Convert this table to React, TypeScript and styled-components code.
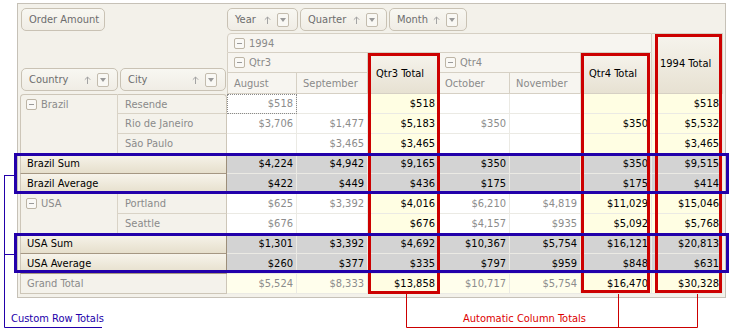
import { Fragment } from "react";
import styled, { createGlobalStyle, css } from "styled-components";

const GlobalStyle = createGlobalStyle`
  html, body {
    margin: 0;
    padding: 0;
    background: #ffffff;
  }
  body {
    font-family: "DejaVu Sans Condensed", "DejaVu Sans", sans-serif;
    font-size: 11px;
  }
`;

type CellKind = "plain" | "total" | "custom" | "grand" | "grandTotal";
type RowKind = "field" | "custom" | "grand";

interface PivotRow {
  kind: RowKind;
  country?: string;
  span?: number;
  city?: string;
  label?: string;
  values: string[];
}

// first data row sits on grid line 5 (filter row + three column header rows)
const FIRST_DATA_ROW = 5;
const TOTAL_COLUMNS = new Set([2, 5, 6]);

const rows: PivotRow[] = [
  { kind: "field", country: "Brazil", span: 3, city: "Resende", values: ["$518", "", "$518", "", "", "", "$518"] },
  { kind: "field", city: "Rio de Janeiro", values: ["$3,706", "$1,477", "$5,183", "$350", "", "$350", "$5,532"] },
  { kind: "field", city: "São Paulo", values: ["", "$3,465", "$3,465", "", "", "", "$3,465"] },
  { kind: "custom", label: "Brazil Sum", values: ["$4,224", "$4,942", "$9,165", "$350", "", "$350", "$9,515"] },
  { kind: "custom", label: "Brazil Average", values: ["$422", "$449", "$436", "$175", "", "$175", "$414"] },
  { kind: "field", country: "USA", span: 2, city: "Portland", values: ["$625", "$3,392", "$4,016", "$6,210", "$4,819", "$11,029", "$15,046"] },
  { kind: "field", city: "Seattle", values: ["$676", "", "$676", "$4,157", "$935", "$5,092", "$5,768"] },
  { kind: "custom", label: "USA Sum", values: ["$1,301", "$3,392", "$4,692", "$10,367", "$5,754", "$16,121", "$20,813"] },
  { kind: "custom", label: "USA Average", values: ["$260", "$377", "$335", "$797", "$959", "$848", "$631"] },
  { kind: "grand", label: "Grand Total", values: ["$5,524", "$8,333", "$13,858", "$10,717", "$5,754", "$16,470", "$30,328"] },
];

const cellKind = (row: RowKind, col: number): CellKind => {
  if (row === "custom") return "custom";
  const isTotal = TOTAL_COLUMNS.has(col);
  if (row === "grand") return isTotal ? "grandTotal" : "grand";
  return isTotal ? "total" : "plain";
};

const Page = styled.div`
  position: relative;
  width: 731px;
  height: 332px;
  overflow: hidden;
`;

const Pivot = styled.div`
  width: 709px;
  margin: 3px 0 0 17px;
  box-sizing: border-box;
  border: 1px solid #c6c1b7;
  background: #f3f1ea;
  padding: 0 2px 3px 2px;
`;

const Grid = styled.div`
  display: grid;
  grid-template-columns: 98px 109px 70px repeat(6, 71px);
  grid-template-rows: 29px 20px 20px 21px repeat(10, 20px);
`;

const FilterArea = styled.div`
  grid-column: 1 / 3;
  grid-row: 1;
  display: flex;
  align-items: flex-start;
  padding: 4px 0 0 1px;
`;

const ColumnFieldArea = styled.div`
  grid-column: 3 / 10;
  grid-row: 1;
  display: flex;
  align-items: flex-start;
  gap: 2px;
  padding-top: 4px;
`;

const RowFieldArea = styled.div`
  grid-column: 1 / 3;
  grid-row: 2 / 5;
  display: flex;
  align-items: flex-end;
  gap: 2px;
  padding: 0 0 3px 1px;
`;

const FieldButton = styled.div<{ $width: number }>`
  width: ${(p) => p.$width}px;
  height: 23px;
  box-sizing: border-box;
  display: flex;
  align-items: center;
  padding: 0 8px 0 7px;
  border: 1px solid #c9c2b4;
  border-radius: 5px;
  background: linear-gradient(#f8f7f2, #f0ede5);
  color: #6d6d6d;
  white-space: nowrap;
`;

const FieldCaption = styled.span`
  flex: 1;
`;

const SortIcon = styled.svg`
  width: 7px;
  height: 8px;
  margin-right: 6px;
  flex: none;
`;

const DropBox = styled.span`
  width: 12px;
  height: 14px;
  box-sizing: border-box;
  flex: none;
  display: flex;
  align-items: center;
  justify-content: center;
  border: 1px solid #c3bcae;
  border-radius: 2px;
  background: #f9f8f4;

  &::after {
    content: "";
    border-top: 4px solid #9a9a9a;
    border-left: 3.5px solid transparent;
    border-right: 3.5px solid transparent;
  }
`;

const MinusBox = styled.span`
  width: 11px;
  height: 11px;
  box-sizing: border-box;
  flex: none;
  display: flex;
  align-items: center;
  justify-content: center;
  border: 1px solid #bdb5a6;
  border-radius: 2px;
  background: #faf9f6;

  &::after {
    content: "";
    width: 5px;
    height: 1px;
    background: #9a9a9a;
  }
`;

interface Placed {
  $col: number;
  $row: number;
  $colSpan?: number;
  $rowSpan?: number;
}

const placed = css<Placed>`
  grid-column: ${(p) => p.$col} / span ${(p) => p.$colSpan ?? 1};
  grid-row: ${(p) => p.$row} / span ${(p) => p.$rowSpan ?? 1};
  box-sizing: border-box;
  min-width: 0;
`;

const HeaderCell = styled.div<Placed & { $total?: boolean; $top?: boolean; $left?: boolean }>`
  ${placed};
  display: flex;
  align-items: center;
  gap: 4px;
  padding-left: ${(p) => (p.$total ? 8 : 6)}px;
  border-right: 1px solid #d6d0c4;
  border-bottom: 1px solid #d6d0c4;
  background: #f7f5f0;
  color: #8a8a8a;
  white-space: nowrap;
  ${(p) =>
    p.$total &&
    css`
      background: linear-gradient(#f6f4ed, #e7e1d2);
      color: #000;
    `}
  ${(p) =>
    p.$top &&
    css`
      border-top: 1px solid #d6d0c4;
    `}
  ${(p) =>
    p.$left &&
    css`
      border-left: 1px solid #d6d0c4;
    `}
  ${(p) =>
    p.$top &&
    p.$left &&
    css`
      border-top-left-radius: 4px;
    `}
`;

const CountryCell = styled.div<Placed & { $first?: boolean }>`
  ${placed};
  display: flex;
  align-items: flex-start;
  padding-left: 5px;
  border-left: 1px solid #cdc6b8;
  border-right: 1px solid #d9d3c6;
  border-bottom: 1px solid #d9d3c6;
  background: #f4f2eb;
  color: #8a8a8a;
  ${(p) =>
    p.$first &&
    css`
      border-top: 1px solid #cdc6b8;
      border-top-left-radius: 4px;
    `}
`;

const CountryLine = styled.div`
  height: 19px;
  display: flex;
  align-items: center;
  gap: 4px;
`;

const CityCell = styled.div<Placed & { $first?: boolean }>`
  ${placed};
  display: flex;
  align-items: center;
  padding-left: 7px;
  border-right: 1px solid #cdc6b8;
  border-bottom: 1px solid #d9d3c6;
  background: #f4f2eb;
  color: #8a8a8a;
  white-space: nowrap;
  ${(p) =>
    p.$first &&
    css`
      border-top: 1px solid #cdc6b8;
      border-top-right-radius: 4px;
    `}
`;

const SummaryHead = styled.div<Placed & { $kind: RowKind }>`
  ${placed};
  display: flex;
  align-items: center;
  padding-left: 6px;
  border-left: 1px solid #cdc6b8;
  white-space: nowrap;
  ${(p) =>
    p.$kind === "custom"
      ? css`
          background: linear-gradient(#f7f4eb, #e6dfcc);
          border-right: 1px solid #9c8e7a;
          border-bottom: 1px solid #a59783;
          color: #000;
        `
      : css`
          background: #f4f2eb;
          border-right: 1px solid #cdc6b8;
          border-bottom: 1px solid #cdc6b8;
          color: #8a8a8a;
        `}
`;

const cellTheme: Record<CellKind, { bg: string; fg: string }> = {
  plain: { bg: "#ffffff", fg: "#8c8c8c" },
  total: { bg: "#fffee3", fg: "#000000" },
  custom: { bg: "#d3d3d3", fg: "#000000" },
  grand: { bg: "#fffeec", fg: "#8c8c8c" },
  grandTotal: { bg: "#fffde3", fg: "#000000" },
};

const ValueCell = styled.div<Placed & { $kind: CellKind; $focused?: boolean }>`
  ${placed};
  display: flex;
  align-items: center;
  justify-content: flex-end;
  padding-right: 3px;
  border-right: 1px solid #ebeae4;
  border-bottom: 1px solid #ebeae4;
  background: ${(p) => cellTheme[p.$kind].bg};
  color: ${(p) => cellTheme[p.$kind].fg};
  ${(p) =>
    p.$focused &&
    css`
      outline: 1px dotted #8a8a8a;
      outline-offset: -1px;
    `}
`;

// annotation frames laid over the grid cells
const Frame = styled.div<Placed & { $color: string; $inset: string }>`
  ${placed};
  margin: ${(p) => p.$inset};
  border: 3px solid ${(p) => p.$color};
  pointer-events: none;
  z-index: 2;
`;

const Callouts = styled.svg`
  position: absolute;
  left: 0;
  top: 0;
  width: 731px;
  height: 332px;
  pointer-events: none;
`;

const Footer = styled.div`
  display: grid;
  grid-template-columns: 452px auto;
  margin-top: 14px;
  padding-left: 11px;
  line-height: 13px;
`;

const Note = styled.span<{ $color: string }>`
  color: ${(p) => p.$color};
  white-space: nowrap;
`;

const SortArrow = () => (
  <SortIcon viewBox="0 0 7 8">
    <path d="M3.5 1 V8 M0.8 3.7 L3.5 1 L6.2 3.7" fill="none" stroke="#a3a3a3" strokeWidth="1" />
  </SortIcon>
);

const Field = ({ caption, width, sortable = true }: { caption: string; width: number; sortable?: boolean }) => (
  <FieldButton $width={width}>
    <FieldCaption>{caption}</FieldCaption>
    {sortable && (
      <>
        <SortArrow />
        <DropBox />
      </>
    )}
  </FieldButton>
);

const BLUE = "#2200aa";
const RED = "#cc0000";

export default function App() {
  return (
    <Page>
      <GlobalStyle />
      <Pivot>
        <Grid>
          <FilterArea>
            <Field caption="Order Amount" width={84} sortable={false} />
          </FilterArea>
          <ColumnFieldArea>
            <Field caption="Year" width={71} />
            <Field caption="Quarter" width={87} />
            <Field caption="Month" width={78} />
          </ColumnFieldArea>
          <RowFieldArea>
            <Field caption="Country" width={97} />
            <Field caption="City" width={106} />
          </RowFieldArea>

          <HeaderCell $col={3} $row={2} $colSpan={6} $top $left>
            <MinusBox />
            1994
          </HeaderCell>
          <HeaderCell $col={9} $row={2} $rowSpan={3} $total $top>
            1994 Total
          </HeaderCell>
          <HeaderCell $col={3} $row={3} $colSpan={2} $left>
            <MinusBox />
            Qtr3
          </HeaderCell>
          <HeaderCell $col={5} $row={3} $rowSpan={2} $total>
            Qtr3 Total
          </HeaderCell>
          <HeaderCell $col={6} $row={3} $colSpan={2}>
            <MinusBox />
            Qtr4
          </HeaderCell>
          <HeaderCell $col={8} $row={3} $rowSpan={2} $total>
            Qtr4 Total
          </HeaderCell>
          <HeaderCell $col={3} $row={4} $left>
            August
          </HeaderCell>
          <HeaderCell $col={4} $row={4}>
            September
          </HeaderCell>
          <HeaderCell $col={6} $row={4}>
            October
          </HeaderCell>
          <HeaderCell $col={7} $row={4}>
            November
          </HeaderCell>

          {rows.map((r, i) => {
            const gridRow = FIRST_DATA_ROW + i;
            return (
              <Fragment key={i}>
                {r.country && (
                  <CountryCell $col={1} $row={gridRow} $rowSpan={r.span} $first={i === 0}>
                    <CountryLine>
                      <MinusBox />
                      {r.country}
                    </CountryLine>
                  </CountryCell>
                )}
                {r.city && (
                  <CityCell $col={2} $row={gridRow} $first={i === 0}>
                    {r.city}
                  </CityCell>
                )}
                {r.label && (
                  <SummaryHead $col={1} $row={gridRow} $colSpan={2} $kind={r.kind}>
                    {r.label}
                  </SummaryHead>
                )}
                {r.values.map((v, c) => (
                  <ValueCell
                    key={c}
                    $col={c + 3}
                    $row={gridRow}
                    $kind={cellKind(r.kind, c)}
                    $focused={i === 0 && c === 0}
                  >
                    {v}
                  </ValueCell>
                ))}
              </Fragment>
            );
          })}

          <Frame $col={5} $row={3} $rowSpan={12} $color={RED} $inset="0 -1px 0 0" />
          <Frame $col={8} $row={3} $rowSpan={12} $color={RED} $inset="0 2px 1px 0" />
          <Frame $col={9} $row={2} $rowSpan={13} $color={RED} $inset="1px 1px 1px 3px" />
          <Frame $col={1} $row={8} $colSpan={9} $rowSpan={2} $color={BLUE} $inset="-1px -6px 0 -6px" />
          <Frame $col={1} $row={12} $colSpan={9} $rowSpan={2} $color={BLUE} $inset="-1px -6px 1px -6px" />
        </Grid>
      </Pivot>

      <Footer>
        <Note $color={BLUE}>Custom Row Totals</Note>
        <Note $color="#dd0000">Automatic Column Totals</Note>
      </Footer>

      <Callouts viewBox="0 0 731 332">
        <path d="M4.5 175 V327.5 H102 M4.5 175.5 H14 M4.5 254.5 H14" fill="none" stroke={BLUE} strokeWidth="1" />
        <path d="M406.5 294 V327.5 H697.5 V294 M618.5 294 V327.5" fill="none" stroke={RED} strokeWidth="1" />
      </Callouts>
    </Page>
  );
}
